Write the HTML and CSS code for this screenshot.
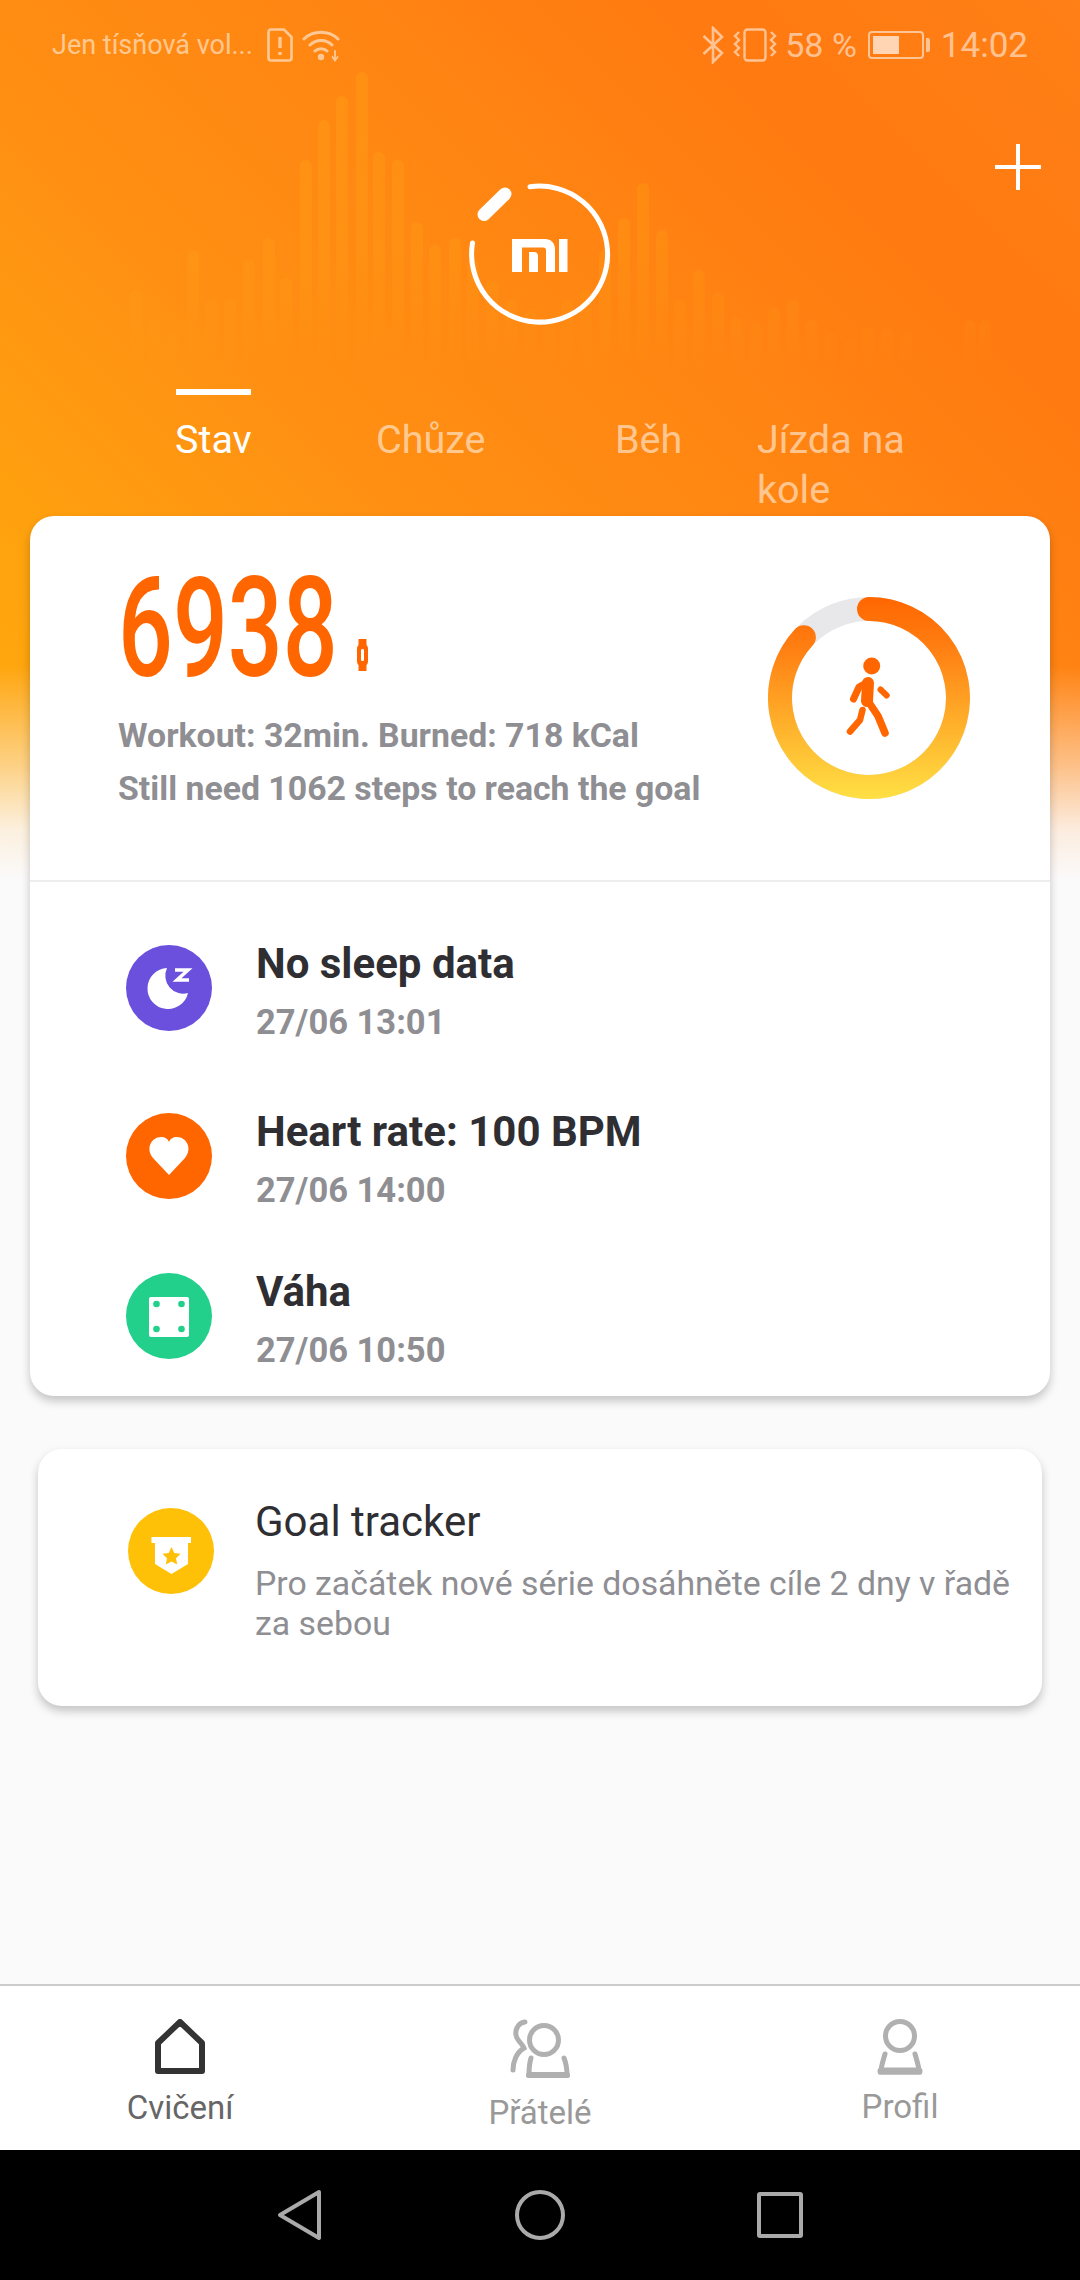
FILE: index.html
```html
<!DOCTYPE html>
<html lang="en">

<head>
    <meta charset="UTF-8">
    <meta name="viewport" content="width=device-width, initial-scale=1.0">
    <title>Cvičení</title>
    <link rel="stylesheet" href="styles.css">
</head>

<body>
    <div class="screen">
        <!-- Orange header -->
        <header class="hero">
            <svg class="bars" width="1080" height="380" viewBox="0 0 1080 380">
                <defs>
                    <linearGradient id="barFade" gradientUnits="userSpaceOnUse" x1="0" y1="72" x2="0" y2="372">
                        <stop offset="0" stop-color="#ffa816" stop-opacity=".3"/>
                        <stop offset=".6" stop-color="#ffa816" stop-opacity=".22"/>
                        <stop offset="1" stop-color="#ffa816" stop-opacity="0"/>
                    </linearGradient>
                </defs>
                <g fill="url(#barFade)">
                    <rect x="130" y="290" width="12" height="82" rx="6"/><rect x="148" y="320" width="12" height="52" rx="6"/>
                    <rect x="167" y="330" width="12" height="42" rx="6"/><rect x="187" y="250" width="12" height="122" rx="6"/>
                    <rect x="205" y="300" width="12" height="72" rx="6"/><rect x="224" y="300" width="12" height="72" rx="6"/>
                    <rect x="243" y="260" width="12" height="112" rx="6"/><rect x="263" y="238" width="12" height="134" rx="6"/>
                    <rect x="280" y="278" width="12" height="94" rx="6"/><rect x="300" y="160" width="12" height="212" rx="6"/>
                    <rect x="318" y="120" width="12" height="252" rx="6"/><rect x="336" y="96" width="12" height="276" rx="6"/>
                    <rect x="356" y="72" width="12" height="300" rx="6"/><rect x="373" y="152" width="12" height="220" rx="6"/>
                    <rect x="392" y="160" width="12" height="212" rx="6"/><rect x="411" y="222" width="12" height="150" rx="6"/>
                    <rect x="429" y="245" width="12" height="127" rx="6"/><rect x="449" y="238" width="12" height="134" rx="6"/>
                    <rect x="467" y="260" width="12" height="112" rx="6"/><rect x="486" y="280" width="12" height="92" rx="6"/>
                    <rect x="505" y="300" width="12" height="72" rx="6"/><rect x="524" y="310" width="12" height="62" rx="6"/>
                    <rect x="543" y="320" width="12" height="52" rx="6"/><rect x="561" y="300" width="12" height="72" rx="6"/>
                    <rect x="580" y="290" width="12" height="82" rx="6"/><rect x="599" y="250" width="12" height="122" rx="6"/>
                    <rect x="618" y="218" width="12" height="154" rx="6"/><rect x="637" y="183" width="12" height="189" rx="6"/>
                    <rect x="656" y="230" width="12" height="142" rx="6"/><rect x="674" y="300" width="12" height="72" rx="6"/>
                    <rect x="693" y="270" width="12" height="102" rx="6"/><rect x="712" y="293" width="12" height="79" rx="6"/>
                    <rect x="731" y="317" width="12" height="55" rx="6"/><rect x="750" y="323" width="12" height="49" rx="6"/>
                    <rect x="768" y="308" width="12" height="64" rx="6"/><rect x="787" y="300" width="12" height="72" rx="6"/>
                    <rect x="806" y="320" width="12" height="52" rx="6"/><rect x="825" y="333" width="12" height="39" rx="6"/>
                    <rect x="844" y="340" width="12" height="32" rx="6"/><rect x="862" y="327" width="12" height="45" rx="6"/>
                    <rect x="881" y="328" width="12" height="44" rx="6"/><rect x="900" y="333" width="12" height="39" rx="6"/>
                    <rect x="964" y="320" width="12" height="52" rx="6"/><rect x="979" y="320" width="12" height="52" rx="6"/>
                </g>
            </svg>

            <div class="status-bar">
                <div class="status-group">
                    <span class="carrier">Jen tísňová vol...</span>
                    <svg class="status-sim" width="26" height="34" viewBox="0 0 26 34" fill="none" stroke="currentColor" stroke-width="2.6">
                        <path d="M4 1.5H17L24.5 9V30A2.5 2.5 0 0 1 22 32.5H4A2.5 2.5 0 0 1 1.5 30V4A2.5 2.5 0 0 1 4 1.5Z"/>
                        <path d="M13 9V20M13 24V27" stroke-width="3.4"/>
                    </svg>
                    <svg class="status-wifi" width="40" height="34" viewBox="0 0 40 34" fill="none" stroke="currentColor" stroke-width="3" stroke-linecap="round">
                        <path d="M2 11C11 2 27 2 36 11M8 17C14 11 24 11 30 17M13 23C16 20 22 20 25 23"/>
                        <circle cx="19" cy="29" r="3.2" fill="currentColor" stroke="none"/>
                        <path d="M33 23V32M30.5 29L33 32.5L35.5 29" stroke-width="1.8"/>
                    </svg>
                </div>
                <div class="status-group">
                    <svg width="22" height="38" viewBox="0 0 22 38" fill="none" stroke="currentColor" stroke-width="2.6">
                        <path d="M1.5 10L20 27L11 36V2L20 11L1.5 28"/>
                    </svg>
                    <svg class="status-vibrate" width="44" height="34" viewBox="0 0 44 34" fill="none" stroke="currentColor" stroke-width="2.4">
                        <rect x="11.5" y="1.5" width="21" height="31" rx="3"/>
                        <path d="M6 4L2 8L6 12L2 16L6 20L2 24L6 28M38 4L42 8L38 12L42 16L38 20L42 24L38 28"/>
                    </svg>
                    <span class="status-text">58 %</span>
                    <div class="battery">
                        <div class="battery-body"><div class="battery-level"></div></div>
                        <div class="battery-tip"></div>
                    </div>
                    <span class="status-text status-time">14:02</span>
                </div>
            </div>

            <svg class="plus" width="46" height="46" viewBox="0 0 46 46" stroke="#fff" stroke-width="4">
                <path d="M23 0V46M0 23H46"/>
            </svg>

            <svg class="logo" width="144" height="144" viewBox="0 0 144 144" fill="none">
                <path d="M62 4.800A68 68 0 1 1 4.500 61" stroke="#fff" stroke-width="5" stroke-linecap="round"/>
                <path d="M16 32.500L37 12" stroke="#fff" stroke-width="13" stroke-linecap="round"/>
                <path fill="#fff" d="M44 57H77C83 57 87 61 87 67V90H78V68C78 66.500 77 65.500 75 65.500H54V90H44Z"/>
                <path fill="#fff" d="M61 70H66C68.500 70 70 71.500 70 74V90H61Z"/>
                <rect x="91" y="57" width="8.500" height="33" fill="#fff"/>
            </svg>

            <nav class="tabs">
                <div class="tab tab-stav active">Stav</div>
                <div class="tab tab-chuze">Chůze</div>
                <div class="tab tab-beh">Běh</div>
                <div class="tab tab-kolo">Jízda na kole</div>
            </nav>
        </header>

        <main class="content">
            <!-- Steps and health list -->
            <section class="card card-main">
                <div class="steps">
                    <div class="steps-info">
                        <div class="steps-count">
                            <span class="steps-number">6938</span>
                            <svg class="watch" width="11" height="32" viewBox="0 0 11 32">
                                <path fill="#ff6600" fill-rule="evenodd" d="M1.500 0H9.500V6C10.500 7 11 8 11 10V22C11 24 10.500 25 9.500 26V32H1.500V26C.5 25 0 24 0 22V10C0 8 .5 7 1.500 6ZM5.500 10C4.500 10 4 10.500 4 11.500V20.500C4 21.500 4.500 22 5.500 22C6.500 22 7 21.500 7 20.500V11.500C7 10.500 6.500 10 5.500 10Z"/>
                            </svg>
                        </div>
                        <p class="steps-line">Workout: 32min. Burned: 718 kCal</p>
                        <p class="steps-line">Still need 1062 steps to reach the goal</p>
                    </div>
                    <svg class="ring" width="202" height="202" viewBox="0 0 202 202" fill="none">
                        <defs>
                            <linearGradient id="ringFill" gradientUnits="userSpaceOnUse" x1="0" y1="0" x2="0" y2="202">
                                <stop offset="0" stop-color="#ff6600"/>
                                <stop offset=".25" stop-color="#ff7f12"/>
                                <stop offset="1" stop-color="#ffe044"/>
                            </linearGradient>
                        </defs>
                        <circle cx="101" cy="101" r="89" stroke="#e8e8ea" stroke-width="24"/>
                        <path d="M101 12A89 89 0 1 1 35.900 40.300" stroke="url(#ringFill)" stroke-width="24" stroke-linecap="round"/>
                        <circle cx="103.700" cy="69" r="8.500" fill="#ff6600"/>
                        <g stroke="#ff6600" stroke-linecap="round" stroke-linejoin="round">
                            <path d="M100 85L91 90L85.500 102" stroke-width="7"/>
                            <path d="M100 86L99 104" stroke-width="12"/>
                            <path d="M100 104L110 119L117 136" stroke-width="7.500"/>
                            <path d="M112.500 92.500L118.700 98.500" stroke-width="6"/>
                            <path d="M94.500 113L92 123L82 134.500" stroke-width="6.500"/>
                        </g>
                    </svg>
                </div>

                <div class="health-list">
                    <div class="health-row row-sleep">
                        <svg class="round-icon" width="86" height="86" viewBox="0 0 86 86">
                            <circle cx="43" cy="43" r="43" fill="#6b4fdd"/>
                            <path fill="#fff" d="M41 23A20.500 20.500 0 1 0 62 48A18 18 0 0 1 41 23Z"/>
                            <path fill="none" stroke="#fff" stroke-width="3.500" d="M49 25H62L51 35H63"/>
                        </svg>
                        <div class="health-text">
                            <div class="health-title">No sleep data</div>
                            <div class="health-date">27/06 13:01</div>
                        </div>
                    </div>
                    <div class="health-row row-heart">
                        <svg class="round-icon" width="86" height="86" viewBox="0 0 86 86">
                            <circle cx="43" cy="43" r="43" fill="#ff6600"/>
                            <path fill="#fff" d="M43 62L27 45C19 35 26 24 35 24C39 24 42 26 43 29C44 26 47 24 51 24C60 24 67 35 59 45Z"/>
                        </svg>
                        <div class="health-text">
                            <div class="health-title">Heart rate: 100 BPM</div>
                            <div class="health-date">27/06 14:00</div>
                        </div>
                    </div>
                    <div class="health-row row-weight">
                        <svg class="round-icon" width="86" height="86" viewBox="0 0 86 86">
                            <circle cx="43" cy="43" r="43" fill="#22d08c"/>
                            <rect x="23" y="24" width="40" height="40" rx="2" fill="#fff"/>
                            <g fill="#22d08c">
                                <circle cx="30.500" cy="31" r="3.300"/><circle cx="55.500" cy="31" r="3.300"/>
                                <circle cx="30.500" cy="56" r="3.300"/><circle cx="55.500" cy="56" r="3.300"/>
                            </g>
                        </svg>
                        <div class="health-text">
                            <div class="health-title">Váha</div>
                            <div class="health-date">27/06 10:50</div>
                        </div>
                    </div>
                </div>
            </section>

            <!-- Goal tracker -->
            <section class="card card-goal">
                <svg class="round-icon" width="86" height="86" viewBox="0 0 86 86">
                    <circle cx="43" cy="43" r="43" fill="#ffc107"/>
                    <path fill="#fff" d="M23.500 29H63V35H60V56L43.500 66L27 56V35H23.500Z"/>
                    <path fill="#ffc107" d="M43.500 39L46.300 45L52.500 45.800L48 50.200L49.200 56.500L43.500 53.400L37.800 56.500L39 50.200L34.500 45.800L40.700 45Z"/>
                </svg>
                <div class="goal-text">
                    <div class="goal-title">Goal tracker</div>
                    <div class="goal-desc">Pro začátek nové série dosáhněte cíle 2 dny v řadě za sebou</div>
                </div>
            </section>
        </main>

        <!-- Bottom tabs -->
        <footer class="bottom-nav">
            <div class="nav-item nav-active">
                <svg width="50" height="55" viewBox="0 0 50 55" fill="none" stroke="currentColor" stroke-width="6" stroke-linejoin="round">
                    <path d="M25 3L3 24V52H47V24Z"/>
                </svg>
                <span>Cvičení</span>
            </div>
            <div class="nav-item nav-friends">
                <svg width="60" height="60" viewBox="0 0 60 60" fill="none" stroke="currentColor" stroke-width="5" stroke-linecap="round">
                    <circle cx="34" cy="21" r="14.500"/>
                    <path d="M21 39C19.500 44 19 50 19 56H57C57 50 56 44 54 39"/>
                    <path d="M19 56H57" stroke-width="6"/>
                    <path d="M15 3C7 4 4 13 7 19C9 23 13 26 14 29C7 33 3 42 3 51"/>
                </svg>
                <span>Přátelé</span>
            </div>
            <div class="nav-item nav-profile">
                <svg width="48" height="56" viewBox="0 0 48 56" fill="none" stroke="currentColor" stroke-width="5" stroke-linecap="round">
                    <circle cx="24" cy="17" r="14.500"/>
                    <path d="M9 35C7 42 5 47 5 53H43C43 47 41 42 39 35"/>
                    <path d="M5 52H43" stroke-width="7"/>
                </svg>
                <span>Profil</span>
            </div>
        </footer>

        <!-- Android buttons -->
        <div class="system-bar">
            <svg width="46" height="52" viewBox="0 0 46 52" fill="none" stroke="#aaa" stroke-width="4" stroke-linejoin="round">
                <path d="M42 3L3 26L42 49Z"/>
            </svg>
            <svg width="52" height="52" viewBox="0 0 52 52" fill="none" stroke="#aaa" stroke-width="4">
                <circle cx="26" cy="26" r="23"/>
            </svg>
            <svg width="46" height="46" viewBox="0 0 46 46" fill="none" stroke="#aaa" stroke-width="4" stroke-linejoin="round">
                <rect x="2" y="2" width="42" height="42" rx="1"/>
            </svg>
        </div>
    </div>
</body>

</html>
```

FILE: styles.css
```css
/* General Styles */
body {
    margin: 0;
    padding: 0;
    font-family: 'Roboto', 'Liberation Sans', sans-serif;
    background: #fbfafb;
}

.screen {
    width: 1080px;
    height: 2280px;
    display: flex;
    flex-direction: column;
    overflow: hidden;
    background-color: #fbfafb;
    background-image:
        linear-gradient(180deg, rgba(251, 250, 251, 0) 0, rgba(251, 250, 251, 0) 665px, rgba(251, 250, 251, .5) 765px, rgba(251, 250, 251, .88) 830px, #fbfafb 880px),
        linear-gradient(45deg, #ffaa0c 0, #ffa30e 18%, #ff8f13 40%, #ff8612 60%, #ff7a11 80%, #ff8016 100%);
    background-size: 1080px 900px;
    background-repeat: no-repeat;
}

/* Header */
.hero {
    position: relative;
    height: 516px;
    flex: none;
}

.bars {
    position: absolute;
    top: 0;
    left: 0;
}

.status-bar {
    position: relative;
    height: 90px;
    padding: 0 52px;
    display: flex;
    align-items: center;
    justify-content: space-between;
    color: rgba(255, 255, 255, .55);
}

.status-group {
    display: flex;
    align-items: center;
}

.carrier {
    font-size: 27px;
    margin-right: 14px;
}

.status-wifi {
    margin-left: 9px;
}

.status-vibrate {
    margin-left: 9px;
}

.status-text {
    font-size: 34px;
    margin-left: 8px;
}

.status-time {
    font-size: 35px;
    margin-left: 11px;
}

.battery {
    display: flex;
    align-items: center;
    margin-left: 11px;
}

.battery-body {
    width: 56px;
    height: 28px;
    box-sizing: border-box;
    border: 2px solid rgba(255, 255, 255, .55);
    border-radius: 4px;
    padding: 3px;
}

.battery-level {
    width: 56%;
    height: 100%;
    background: rgba(255, 255, 255, .68);
}

.battery-tip {
    width: 4px;
    height: 14px;
    margin-left: 2px;
    background: rgba(255, 255, 255, .55);
    border-radius: 0 2px 2px 0;
}

.plus {
    position: absolute;
    top: 144px;
    right: 39px;
}

.logo {
    position: relative;
    display: block;
    margin: 92px auto 0;
}

.tabs {
    position: relative;
    display: flex;
    margin-top: 63px;
    padding-left: 175px;
    font-size: 39.500px;
    line-height: 50px;
    color: rgba(255, 255, 255, .55);
}

.tab {
    padding-top: 26px;
}

.tab.active {
    color: #fff;
    position: relative;
}

.tab.active::before {
    content: "";
    position: absolute;
    top: 0;
    left: 1px;
    width: 75px;
    height: 6px;
    background: #fff;
}

.tab-stav {
    width: 201px;
}

.tab-chuze {
    width: 239px;
}

.tab-beh {
    width: 142px;
}

.tab-kolo {
    width: 170px;
}

/* Cards */
.content {
    flex: 1;
    display: flex;
    flex-direction: column;
}

.card {
    background: #fff;
    box-sizing: border-box;
    border-radius: 24px;
    box-shadow: 0 5px 10px rgba(0, 0, 0, .22);
}

.card-main {
    margin: 0 30px;
    height: 880px;
    overflow: hidden;
}

.steps {
    height: 366px;
    box-sizing: border-box;
    padding: 0 80px 0 88px;
    display: flex;
    align-items: center;
    justify-content: space-between;
    border-bottom: 2px solid #eeeeef;
}

.steps-info {
    margin-bottom: 20px;
}

.steps-count {
    display: flex;
    align-items: flex-end;
    height: 134px;
    margin-bottom: 14px;
    color: #ff6600;
}

.steps-number {
    display: block;
    width: 239px;
    font-size: 140px;
    line-height: 134px;
    font-weight: 500;
    transform: scaleX(.69);
    transform-origin: left center;
}

.watch {
    margin-bottom: 24px;
}

.steps-line {
    margin: 0;
    font-size: 33.800px;
    line-height: 53px;
    font-weight: 700;
    color: #8e8e93;
    white-space: nowrap;
}

.health-list {
    padding-left: 96px;
}

.health-row {
    display: flex;
    align-items: center;
}

.round-icon {
    flex: none;
    display: block;
}

.row-sleep {
    margin-top: 52px;
}

.row-heart {
    margin-top: 60px;
}

.row-weight {
    margin-top: 52px;
}

.health-text {
    margin-left: 44px;
    margin-top: 6px;
}

.health-title {
    font-size: 42px;
    line-height: 48px;
    font-weight: 700;
    color: #2f2f33;
}

.health-date {
    margin-top: 14px;
    font-size: 34.500px;
    line-height: 40px;
    font-weight: 700;
    color: #8e8e93;
}

.card-goal {
    margin: 53px 38px 0;
    height: 257px;
    padding: 50px 24px 0 90px;
    display: flex;
    align-items: flex-start;
}

.card-goal .round-icon {
    margin-top: 9px;
}

.goal-text {
    margin-left: 41px;
}

.goal-title {
    font-size: 42px;
    line-height: 46px;
    color: #2f2f33;
}

.goal-desc {
    margin-top: 19px;
    font-size: 33.800px;
    line-height: 40px;
    color: #8e8e93;
}

/* Bottom navigation */
.bottom-nav {
    height: 166px;
    flex: none;
    box-sizing: border-box;
    background: #fff;
    border-top: 2px solid #cccccc;
    display: flex;
    align-items: flex-start;
    padding-top: 33px;
    font-size: 33px;
    color: #999;
}

.nav-item {
    flex: 1;
    display: flex;
    flex-direction: column;
    align-items: center;
}

.nav-item span {
    margin-top: 16px;
    line-height: 36px;
}

.nav-active {
    color: #333;
}

.nav-active span {
    color: #666;
}

.nav-friends {
    color: #b0b0b0;
}

.nav-friends span {
    margin-top: 16px;
    color: #999;
}

.nav-profile {
    color: #b0b0b0;
}

.nav-profile span {
    margin-top: 14px;
    color: #999;
}

.system-bar {
    height: 130px;
    flex: none;
    background: #000;
    display: flex;
    align-items: center;
    justify-content: center;
    gap: 191px;
}
```
